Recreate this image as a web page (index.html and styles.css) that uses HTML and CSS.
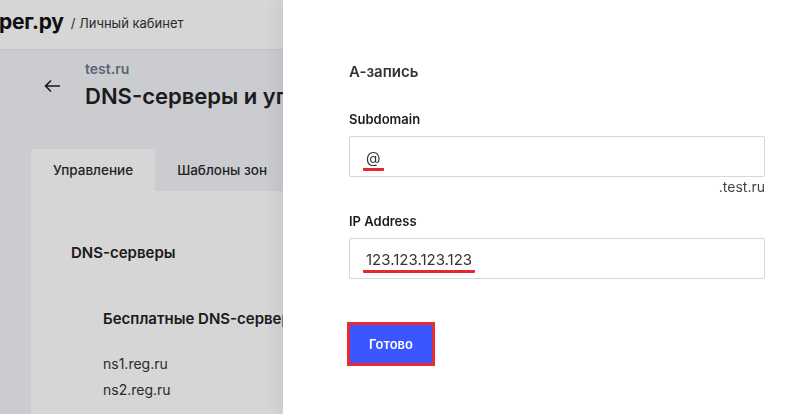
FILE: index.html
```html
<!DOCTYPE html>
<html lang="ru">
  <head>
    <meta charset="UTF-8" />
    <meta name="viewport" content="width=device-width, initial-scale=1.0" />
    <title>DNS-серверы и управление зоной</title>
    <link rel="stylesheet" href="styles.css">
  </head>
  <body>
    <header class="topbar">
      <span class="logo">рег.ру</span>
      <span class="crumb">/ Личный кабинет</span>
    </header>

    <main class="page">
      <div class="page-head">
        <a class="back" href="#">
          <svg width="17" height="14" viewBox="0 0 17 14" fill="none">
            <path d="M16 7H1.5M7 1.5L1.5 7L7 12.5" stroke="#1f1f22" stroke-width="1.6" />
          </svg>
        </a>
        <div>
          <div class="domain">test.ru</div>
          <h1>DNS-серверы и управление зоной</h1>
        </div>
      </div>

      <div class="tabs">
        <div class="tab active">Управление</div>
        <div class="tab">Шаблоны зон</div>
      </div>
      <section class="card">
        <h2>DNS-серверы</h2>
        <div class="servers">
          <h3>Бесплатные DNS-серверы</h3>
          <div class="ns">ns1.reg.ru</div>
          <div class="ns">ns2.reg.ru</div>
        </div>
      </section>
    </main>

    <div class="overlay"></div>

    <aside class="drawer">
      <div class="drawer-title">А-запись</div>

      <label class="label">Subdomain</label>
      <div class="field"><span class="mark">@</span></div>
      <div class="suffix">.test.ru</div>

      <label class="label label-ip">IP Address</label>
      <div class="field"><span class="mark">123.123.123.123</span></div>

      <button class="btn">Готово</button>
    </aside>
  </body>
</html>
```

FILE: styles.css
```css
* {
  box-sizing: border-box;
}

body {
  margin: 0;
  font-family: "Inter", "Noto Sans", Arial, sans-serif;
  background: #f2f3f8;
  color: #222;
  overflow: hidden;
  height: 100vh;
}

/* шапка */
.topbar {
  height: 50px;
  background: #fff;
  border-bottom: 1px solid #e4e6ee;
  display: flex;
  align-items: center;
  padding: 0 0 6px 0;
  gap: 7px;
}

.logo {
  font-size: 21px;
  font-weight: 700;
  color: #111;
  letter-spacing: -0.3px;
  margin-left: -1px;
}

.crumb {
  font-size: 13px;
  color: #333;
  margin-top: 2px;
}

/* страница */
.page {
  padding: 11px 0 0 31px;
  width: 760px;
}

.page-head {
  display: flex;
  align-items: flex-start;
  gap: 24px;
  padding-left: 13px;
}

.back {
  display: block;
  margin-top: 16px;
}

.domain {
  font-size: 14px;
  font-weight: 600;
  color: #6c7a8e;
  line-height: 16px;
}

h1 {
  margin: 4px 0 0;
  font-size: 22px;
  font-weight: 600;
  line-height: 30px;
  color: #222;
  white-space: nowrap;
}

.tabs {
  display: flex;
  margin-top: 38px;
}

.tab {
  height: 42px;
  padding: 0 22px;
  display: flex;
  align-items: center;
  font-size: 13.5px;
  font-weight: 500;
  color: #2a2a2e;
}

.tab.active {
  background: #fff;
}

.card {
  background: #fff;
  padding: 51px 40px 0;
  height: 223px;
}

h2 {
  margin: 0;
  font-size: 15px;
  font-weight: 600;
  line-height: 22px;
  color: #222;
}

.servers {
  padding: 44px 0 0 32px;
}

h3 {
  margin: 0 0 21px;
  font-size: 15px;
  font-weight: 600;
  line-height: 22px;
  color: #222;
  white-space: nowrap;
}

.ns {
  font-size: 14px;
  line-height: 26px;
  color: #333;
}

/* затемнение и боковая панель */
.overlay {
  position: fixed;
  inset: 0;
  background: rgba(0, 0, 0, 0.16);
}

.drawer {
  position: fixed;
  top: 0;
  right: 0;
  bottom: 0;
  width: 515px;
  background: #fff;
  box-shadow: -6px 0 18px rgba(20, 30, 60, 0.08);
  padding: 62px 33px 0 66px;
  display: flex;
  flex-direction: column;
  align-items: stretch;
}

.drawer-title {
  font-size: 15px;
  font-weight: 600;
  line-height: 20px;
  color: #333;
  margin-bottom: 29px;
}

.label {
  font-size: 13px;
  font-weight: 600;
  line-height: 16px;
  color: #1c1c1f;
  margin-bottom: 9px;
}

.label-ip {
  margin-top: 17px;
}

.field {
  height: 41px;
  border: 1px solid #d4d6dc;
  border-radius: 2px;
  padding: 10px 0 0 13px;
}

/* подчёркивание значения */
.mark {
  display: inline-block;
  font-size: 15px;
  line-height: 20px;
  color: #333;
  padding: 0 3px;
  border-bottom: 3px solid #e8262f;
  border-radius: 1px;
}

.suffix {
  text-align: right;
  font-size: 14px;
  line-height: 18px;
  color: #444;
  margin-top: 1px;
}

.btn {
  align-self: flex-start;
  margin-top: 46px;
  margin-left: 1px;
  width: 82px;
  height: 38px;
  border: 0;
  background: #3b55ff;
  color: #fff;
  font-family: inherit;
  font-size: 13px;
  font-weight: 600;
  outline: 3px solid #ea2a33;
}
```
